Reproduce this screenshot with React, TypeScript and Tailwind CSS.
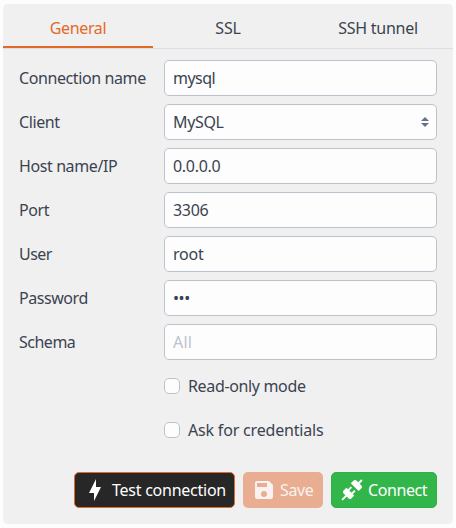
import type { ReactNode } from "react";

const tabs = [
  { label: "General", active: true, spacing: "tracking-[-0.35px]" },
  { label: "SSL", active: false, spacing: "tracking-[-0.2px]" },
  { label: "SSH tunnel", active: false, spacing: "tracking-[-0.25px]" },
];

function Row({ label, spacing, children }: { label: string; spacing: string; children: ReactNode }) {
  return (
    <div className="flex h-9 items-center">
      <label className="w-[145px] shrink-0 whitespace-nowrap">
        <span className={spacing}>{label}</span>
      </label>
      {children}
    </div>
  );
}

function Field({ value, spacing }: { value: string; spacing: string }) {
  return (
    <input
      readOnly
      value={value}
      className={"h-9 w-[273px] rounded-[5px] border border-[#bcc3ce] bg-[#fdfdfd] px-2 outline-none " + spacing}
    />
  );
}

function Check({ label, spacing }: { label: string; spacing: string }) {
  return (
    <label className="ml-[145px] flex h-9 items-center gap-2">
      <span className="size-4 shrink-0 rounded-[5px] border border-[#bcc3ce] bg-[#fdfdfd]" />
      <span className={spacing}>{label}</span>
    </label>
  );
}

function Icon({ d }: { d: string }) {
  return (
    <svg viewBox="0 0 24 24" className="size-6 shrink-0" fill="currentColor">
      <path d={d} />
    </svg>
  );
}

export default function App() {
  return (
    <div className="h-[528px] w-[456px] bg-[#fdfdfd] px-[3px] py-1 font-['Noto_Sans',sans-serif] text-[16px] leading-6 text-[#3b4351]">
      <div className="flex h-[520px] flex-col rounded-[5px] bg-[#f0f0f0]">
        <div className="flex h-[45px] shrink-0 border-b border-[#dadee6]">
          {tabs.map((t) => (
            <div
              key={t.label}
              className={
                "flex w-[150px] items-center justify-center border-b-2 pt-1.5 " +
                (t.active ? "border-[#e36929] text-[#e36929]" : "border-transparent")
              }
            >
              <span className={t.spacing}>{t.label}</span>
            </div>
          ))}
        </div>
        <div className="flex flex-col gap-2 px-4 pt-[11px]">
          <Row label="Connection name" spacing="tracking-[-0.4px]">
            <Field value="mysql" spacing="tracking-[-0.55px]" />
          </Row>
          <Row label="Client" spacing="tracking-[-0.4px]">
            <div className="flex h-9 w-[273px] items-center justify-between rounded-[5px] border border-[#bcc3ce] bg-[#fdfdfd] pr-[7px] pl-2">
              <span className="tracking-[-0.35px]">MySQL</span>
              <svg viewBox="0 0 8 10" className="h-[10px] w-2" fill="#667189">
                <path d="M4 0L8 4H0zM0 6H8L4 10z" />
              </svg>
            </div>
          </Row>
          <Row label="Host name/IP" spacing="tracking-[-0.4px]">
            <Field value="0.0.0.0" spacing="tracking-[-0.3px]" />
          </Row>
          <Row label="Port" spacing="tracking-[-0.4px]">
            <Field value="3306" spacing="tracking-[-0.3px]" />
          </Row>
          <Row label="User" spacing="tracking-[-0.55px]">
            <Field value="root" spacing="tracking-[-0.2px]" />
          </Row>
          <Row label="Password" spacing="tracking-[-0.45px]">
            <Field value="•••" spacing="tracking-[-0.4px]" />
          </Row>
          <Row label="Schema" spacing="tracking-[-0.5px]">
            <Field value="All" spacing="tracking-[0.2px] text-[#bcc3ce]" />
          </Row>
          <Check label="Read-only mode" spacing="tracking-[-0.35px]" />
          <Check label="Ask for credentials" spacing="tracking-[-0.18px]" />
        </div>
        <div className="mt-6 flex justify-end gap-2 pr-4 whitespace-nowrap text-white">
          <button className="flex h-9 w-[161px] items-center gap-[5px] rounded-[5px] border border-[#e36929] bg-[#272727] pl-2">
            <Icon d="M11 15H6L13 1V9H18L11 23V15Z" />
            <span className="tracking-[-0.25px]">Test connection</span>
          </button>
          <button className="flex h-9 w-20 items-center gap-1 rounded-[5px] bg-[#e9ae92] pl-[9px] text-[#f8f3f0]">
            <Icon d="M15,9H5V5H15M12,19A3,3 0 0,1 9,16A3,3 0 0,1 12,13A3,3 0 0,1 15,16A3,3 0 0,1 12,19M17,3H5C3.89,3 3,3.9 3,5V19A2,2 0 0,0 5,21H19A2,2 0 0,0 21,19V7L17,3Z" />
            <span className="tracking-[-0.4px]">Save</span>
          </button>
          <button className="flex h-9 w-[106px] items-center gap-1 rounded-[5px] border border-[#2faf46] bg-[#32b64a] pl-2">
            <Icon d="M21.4 7.5C22.2 8.3 22.2 9.6 21.4 10.3L18.6 13.1L10.8 5.3L13.6 2.5C14.4 1.7 15.7 1.7 16.4 2.5L18.2 4.3L21.2 1.3L22.6 2.7L19.6 5.7L21.4 7.5M15.6 13.3L14.2 11.9L11.4 14.7L9.3 12.6L12.1 9.8L10.7 8.4L7.9 11.2L6.4 9.8L3.6 12.6C2.8 13.4 2.8 14.7 3.6 15.4L5.4 17.2L1.4 21.2L2.8 22.6L6.8 18.6L8.6 20.4C9.4 21.2 10.7 21.2 11.4 20.4L14.2 17.6L12.8 16.2L15.6 13.3Z" />
            <span className="tracking-[-0.4px]">Connect</span>
          </button>
        </div>
      </div>
    </div>
  );
}
